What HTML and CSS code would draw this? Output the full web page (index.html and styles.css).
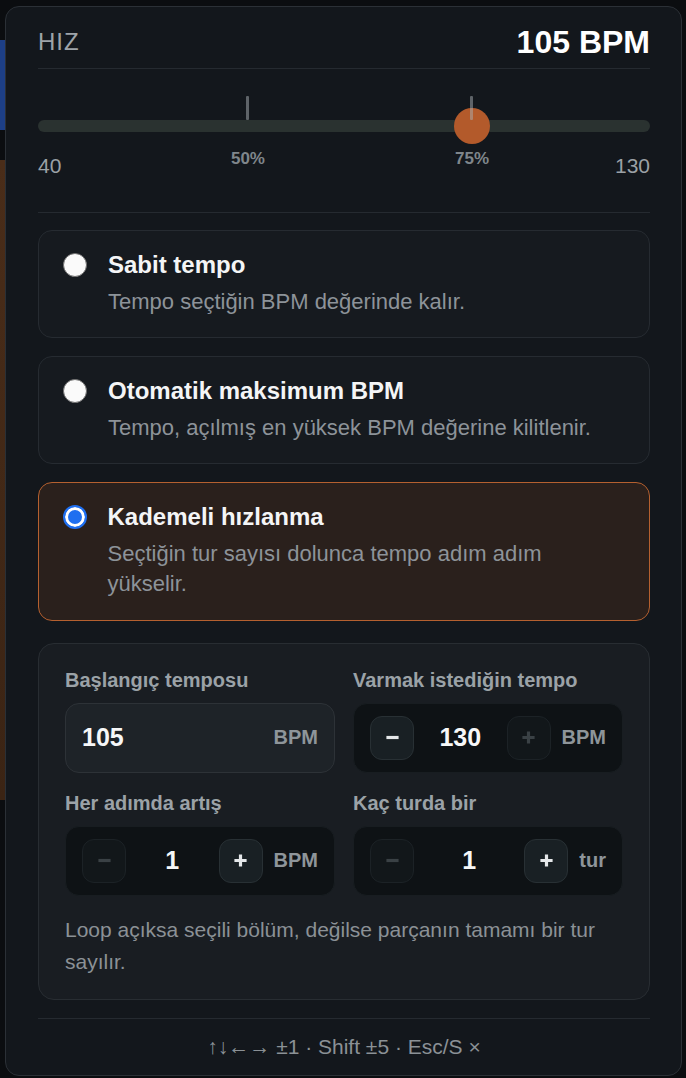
FILE: index.html
```html
<!DOCTYPE html>
<html lang="tr">
<head>
<meta charset="utf-8">
<title>Hız</title>
<link rel="stylesheet" href="styles.css">
</head>
<body>
<div class="panel">
  <header class="head">
    <span class="head-label">HIZ</span>
    <span class="head-value">105 BPM</span>
  </header>
  <div class="rule rule-top"></div>

  <div class="slider">
    <div class="track"></div>
    <span class="tick" style="--p:0.3333"></span>
    <span class="pct" style="--p:0.3333">50%</span>
    <div class="thumb" style="--p:0.7222"></div>
    <span class="tick" style="--p:0.7222"></span>
    <span class="pct" style="--p:0.7222">75%</span>
  </div>
  <div class="range-labels"><span>40</span><span>130</span></div>
  <div class="rule rule-mid"></div>

  <div class="modes">
    <label class="mode">
      <input class="radio" type="radio" name="mode">
      <span class="mode-text">
        <span class="mode-title">Sabit tempo</span>
        <span class="mode-desc">Tempo seçtiğin BPM değerinde kalır.</span>
      </span>
    </label>
    <label class="mode">
      <input class="radio" type="radio" name="mode">
      <span class="mode-text">
        <span class="mode-title">Otomatik maksimum BPM</span>
        <span class="mode-desc">Tempo, açılmış en yüksek BPM değerine kilitlenir.</span>
      </span>
    </label>
    <label class="mode mode-active">
      <input class="radio" type="radio" name="mode" checked>
      <span class="mode-text">
        <span class="mode-title">Kademeli hızlanma</span>
        <span class="mode-desc">Seçtiğin tur sayısı dolunca tempo adım adım yükselir.</span>
      </span>
    </label>
  </div>

  <section class="settings">
    <div class="grid">
      <div class="field">
        <div class="field-label">Başlangıç temposu</div>
        <div class="input">
          <span class="input-value">105</span>
          <span class="unit">BPM</span>
        </div>
      </div>
      <div class="field">
        <div class="field-label">Varmak istediğin tempo</div>
        <div class="stepper">
          <button class="step" type="button"><svg viewBox="0 0 16 16" class="ico"><path d="M1.5 8h13"/></svg></button>
          <span class="step-value">130</span>
          <button class="step step-off" type="button"><svg viewBox="0 0 16 16" class="ico"><path d="M1.5 8h13M8 1.5v13"/></svg></button>
          <span class="unit">BPM</span>
        </div>
      </div>
      <div class="field">
        <div class="field-label">Her adımda artış</div>
        <div class="stepper">
          <button class="step step-off" type="button"><svg viewBox="0 0 16 16" class="ico"><path d="M1.5 8h13"/></svg></button>
          <span class="step-value">1</span>
          <button class="step" type="button"><svg viewBox="0 0 16 16" class="ico"><path d="M1.5 8h13M8 1.5v13"/></svg></button>
          <span class="unit">BPM</span>
        </div>
      </div>
      <div class="field">
        <div class="field-label">Kaç turda bir</div>
        <div class="stepper">
          <button class="step step-off" type="button"><svg viewBox="0 0 16 16" class="ico"><path d="M1.5 8h13"/></svg></button>
          <span class="step-value">1</span>
          <button class="step" type="button"><svg viewBox="0 0 16 16" class="ico"><path d="M1.5 8h13M8 1.5v13"/></svg></button>
          <span class="unit">tur</span>
        </div>
      </div>
    </div>
    <p class="note">Loop açıksa seçili bölüm, değilse parçanın tamamı bir tur sayılır.</p>
  </section>

  <div class="rule rule-foot"></div>
  <footer class="foot">↑↓←→ ±1 · Shift ±5 · Esc/S ×</footer>
</div>
</body>
</html>
```

FILE: styles.css
```css
* { box-sizing: border-box; }

html, body {
  margin: 0;
  padding: 0;
}

body {
  width: 686px;
  height: 1078px;
  overflow: hidden;
  font-family: "Liberation Sans", Arial, sans-serif;
  background:
    linear-gradient(#1d3f86, #1d3f86) 0 40px / 5px 90px no-repeat,
    linear-gradient(#4a2d19, #3b2414) 0 160px / 5px 640px no-repeat,
    #0b0d10;
  padding: 6px 4px 0 5px;
}

.panel {
  width: 677px;
  height: 1070px;
  background: #13171c;
  border: 1px solid #2b3036;
  border-radius: 14px;
  padding: 17px 31px 0 32px;
  display: flex;
  flex-direction: column;
}

.head {
  height: 36px;
  display: flex;
  align-items: center;
  justify-content: space-between;
}

.head-label {
  font-size: 24px;
  letter-spacing: 1px;
  color: #9ea4a9;
}

.head-value {
  font-size: 32px;
  font-weight: 700;
  color: #ffffff;
}

.rule {
  height: 1px;
  background: #252a30;
  flex: none;
}

.rule-top { margin-top: 8px; }
.rule-mid { margin-top: 34px; }
.rule-foot { margin-top: 18px; }

.slider {
  position: relative;
  height: 48px;
  margin-top: 27px;
}

.track {
  position: absolute;
  left: 0;
  right: 0;
  top: 24px;
  height: 12px;
  border-radius: 6px;
  background: #2a3230;
}

.thumb {
  position: absolute;
  top: 12px;
  width: 36px;
  height: 36px;
  border-radius: 50%;
  background: #b35a2b;
  left: calc((100% - 36px) * var(--p));
}

.tick {
  position: absolute;
  top: 0;
  width: 3px;
  height: 24px;
  border-radius: 1px;
  background: rgba(170, 176, 180, 0.5);
  left: calc(18px + (100% - 36px) * var(--p) - 1.5px);
}

.pct {
  position: absolute;
  top: 53px;
  line-height: 20px;
  font-size: 17px;
  font-weight: 700;
  color: #7f868b;
  left: calc(18px + (100% - 36px) * var(--p));
  transform: translateX(-50%);
}

.range-labels {
  margin-top: 10px;
  height: 24px;
  line-height: 24px;
  display: flex;
  justify-content: space-between;
  font-size: 21px;
  color: #9ba1a6;
}

.modes {
  margin-top: 17px;
  display: flex;
  flex-direction: column;
  gap: 18px;
}

.mode {
  display: flex;
  align-items: flex-start;
  gap: 21px;
  padding: 20px 30px 20px 24px;
  border: 1px solid #262b31;
  border-radius: 14px;
  background: #161a1f;
}

.mode-active {
  background: #2a201c;
  border: 1.5px solid #b5602f;
  padding: 20px 29.5px 20.5px 23.5px;
}

.radio {
  appearance: none;
  -webkit-appearance: none;
  margin: 2px 0 0;
  width: 24px;
  height: 24px;
  flex: none;
  border-radius: 50%;
  background: #fafafa;
  border: 1.5px solid #6f6f6f;
}

.radio:checked {
  background: #1f6ff0;
  border: 2px solid #1f6ff0;
  box-shadow: inset 0 0 0 3px #ffffff;
}

.mode-text {
  display: flex;
  flex-direction: column;
  gap: 8px;
}

.mode-title {
  font-size: 24px;
  line-height: 28px;
  font-weight: 700;
  color: #f4f5f6;
}

.mode-desc {
  font-size: 22px;
  line-height: 30px;
  color: #8d9399;
}

.settings {
  margin-top: 22px;
  background: #191d22;
  border: 1px solid #282d32;
  border-radius: 16px;
  padding: 24px 26px 21px;
}

.grid {
  display: grid;
  grid-template-columns: 1fr 1fr;
  column-gap: 18px;
  row-gap: 18px;
}

.field-label {
  font-size: 20px;
  line-height: 24px;
  font-weight: 700;
  color: #9ba2a7;
  margin-bottom: 11px;
}

.input {
  height: 70px;
  display: flex;
  align-items: center;
  justify-content: space-between;
  padding: 0 16px;
  background: #1e2328;
  border: 1px solid #2d3237;
  border-radius: 14px;
}

.input-value,
.step-value {
  font-size: 25px;
  font-weight: 700;
  color: #f6f7f8;
}

.unit {
  font-size: 20px;
  font-weight: 700;
  color: #8e959a;
}

.stepper {
  height: 70px;
  display: flex;
  align-items: center;
  padding: 0 16px;
  background: #0e1215;
  border: 1px solid #181d21;
  border-radius: 14px;
}

.step-value {
  flex: 1;
  text-align: center;
}

.stepper .unit {
  margin-left: 11px;
}

.step {
  width: 44px;
  height: 44px;
  flex: none;
  padding: 0;
  display: flex;
  align-items: center;
  justify-content: center;
  border-radius: 12px;
  background: #192024;
  border: 1px solid #283034;
  color: #e4e7e9;
}

.step-off {
  background: #12171a;
  border-color: #1c2226;
  color: #3a4145;
}

.ico {
  width: 15px;
  height: 15px;
  fill: none;
  stroke: currentColor;
  stroke-width: 3.4;
}

.note {
  margin: 18px 0 0;
  font-size: 21px;
  line-height: 32px;
  color: #8b9196;
}

.foot {
  padding: 16px 0;
  line-height: 24px;
  font-size: 21px;
  text-align: center;
  color: #8b9196;
}
```
